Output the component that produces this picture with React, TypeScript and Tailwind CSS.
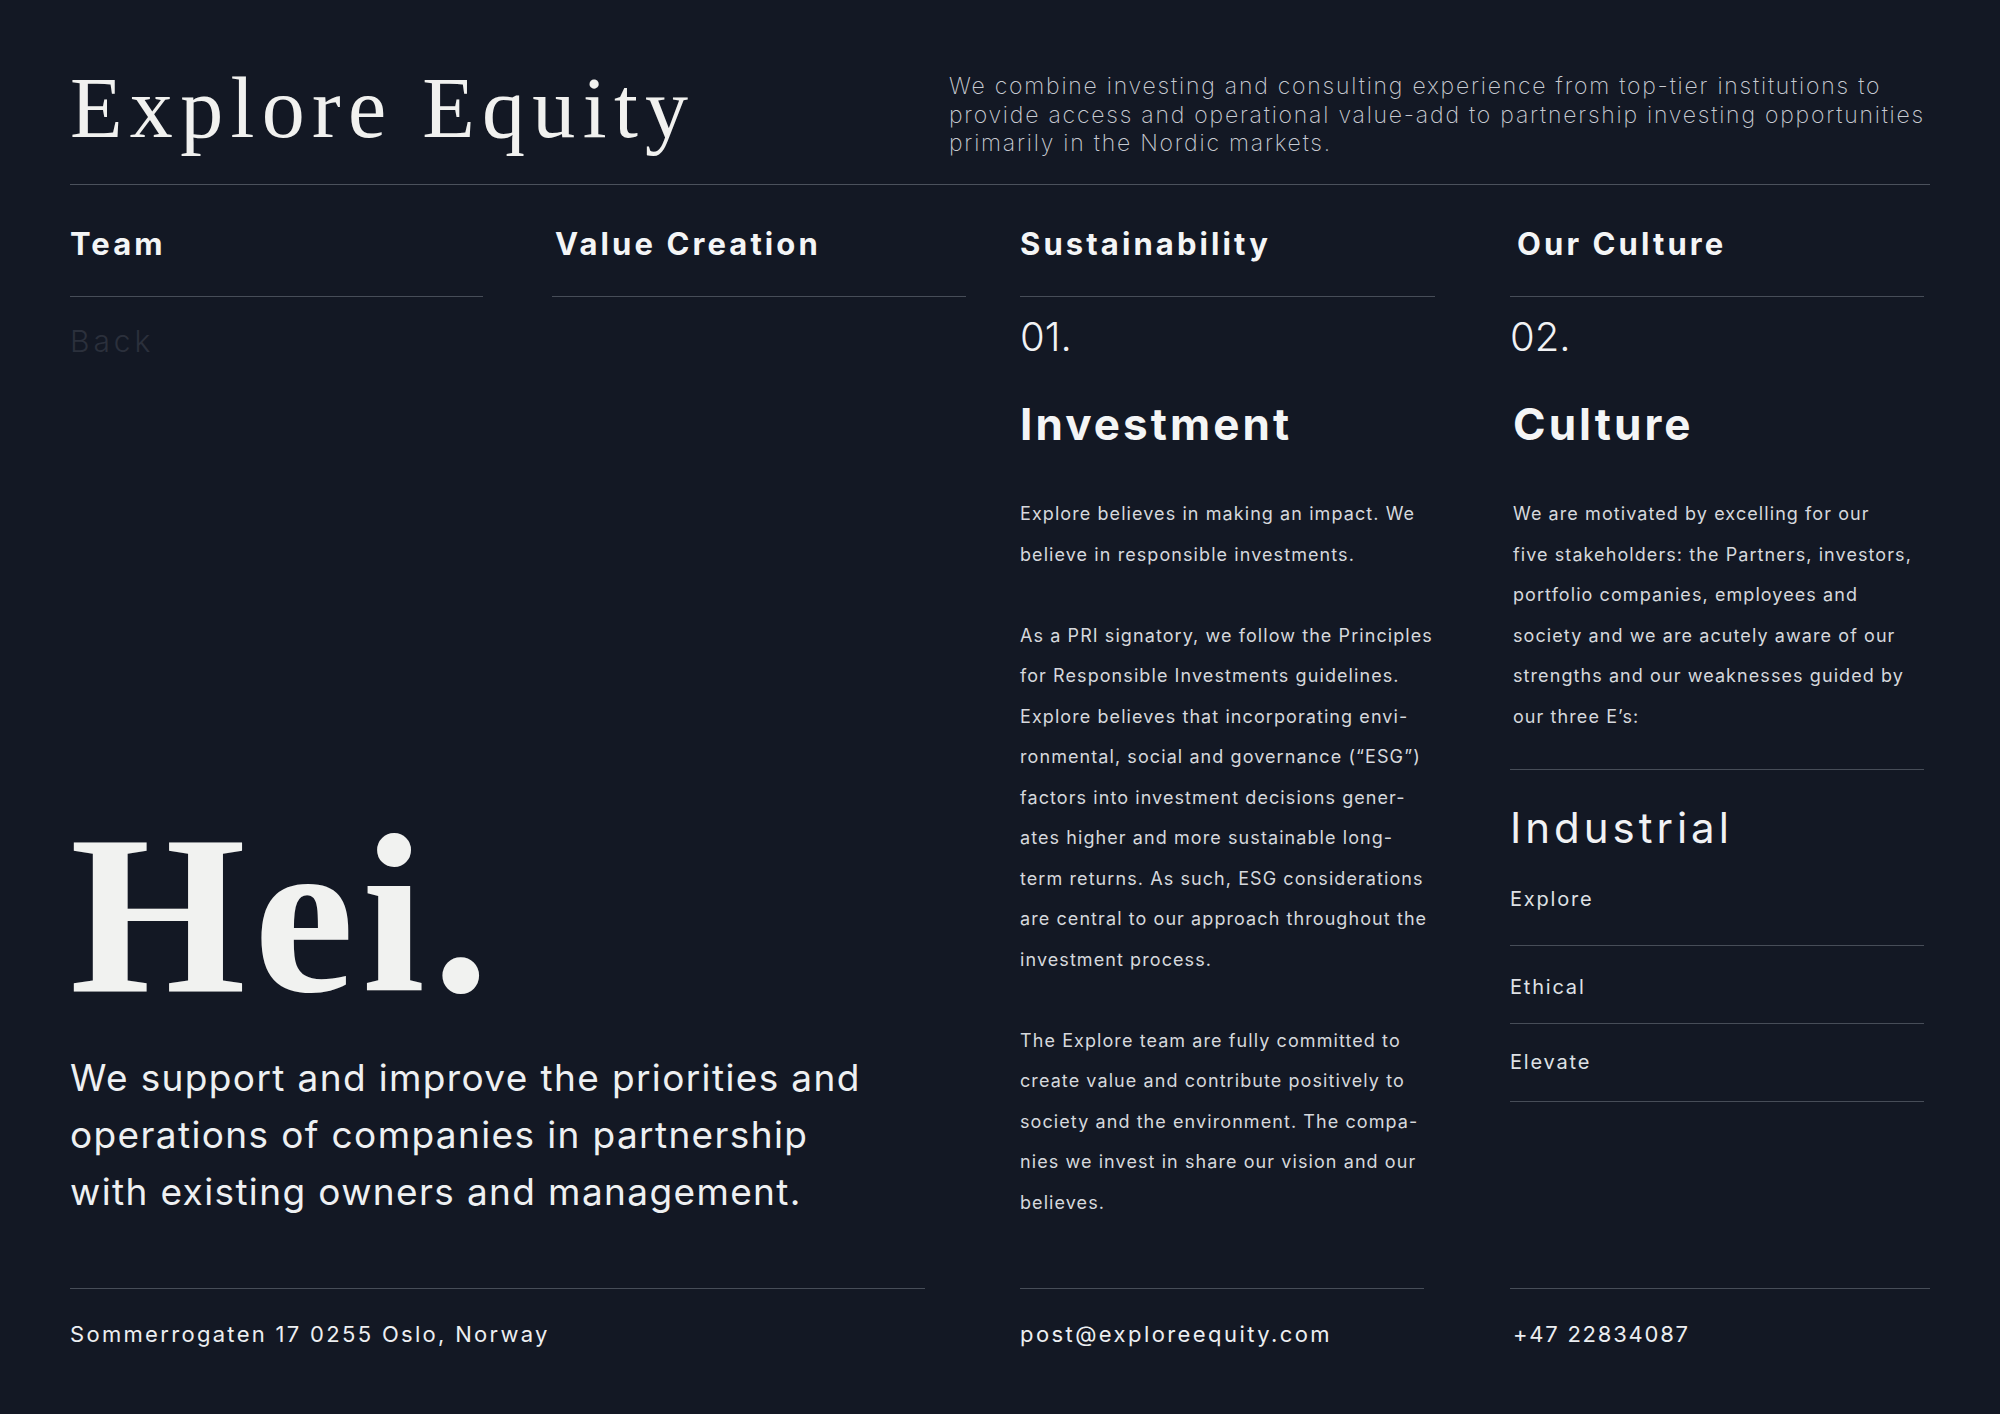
import React from "react";

const investLines = [
  "Explore believes in making an impact. We",
  "believe in responsible investments.",
  "",
  "As a PRI signatory, we follow the Principles",
  "for Responsible Investments guidelines.",
  "Explore believes that incorporating envi-",
  "ronmental, social and governance (“ESG”)",
  "factors into investment decisions gener-",
  "ates higher and more sustainable long-",
  "term returns. As such, ESG considerations",
  "are central to our approach throughout the",
  "investment process.",
  "",
  "The Explore team are fully committed to",
  "create value and contribute positively to",
  "society and the environment. The compa-",
  "nies we invest in share our vision and our",
  "believes.",
];

const cultureLines = [
  "We are motivated by excelling for our",
  "five stakeholders: the Partners, investors,",
  "portfolio companies, employees and",
  "society and we are acutely aware of our",
  "strengths and our weaknesses guided by",
  "our three E’s:",
];

function Body({ lines }: { lines: string[] }) {
  return (
    <div className="text-[18px] leading-[40.5px] tracking-[0.06em] text-[#d6d8dd] whitespace-nowrap">
      {lines.map((l, i) => (
        <div key={i} className="h-[40.5px]">
          {l}
        </div>
      ))}
    </div>
  );
}

function NavHead({ label, inset = "" }: { label: string; inset?: string }) {
  return (
    <div className="border-b border-[#474d58] pt-[43px] pb-[37px]">
      <h2 className={`text-[31px] leading-none font-bold tracking-[0.1em] text-[#f4f5f6] ${inset}`}>
        {label}
      </h2>
    </div>
  );
}

function Footer({ text, width, track, inset = "" }: { text: string; width: string; track: string; inset?: string }) {
  return (
    <div className={`mt-auto border-t border-[#474d58] pt-[34px] pb-[69px] ${width}`}>
      <p className={`text-[22px] leading-none text-[#eceef1] whitespace-nowrap ${track} ${inset}`}>
        {text}
      </p>
    </div>
  );
}

export default function App() {
  return (
    <div className="w-[2000px] h-[1414px] bg-[#131824] px-[70px] flex flex-col font-['Inter','Liberation_Sans',sans-serif]">
      {/* Header */}
      <header className="h-[185px] shrink-0 border-b border-[#4b515c] flex pt-[65px]">
        <h1 className="w-[879px] shrink-0 font-['Liberation_Serif',serif] text-[86px] leading-none tracking-[0.085em] text-[#f1f1ef]">
          Explore Equity
        </h1>
        <p className="mt-[7px] text-[23px] leading-[28.5px] font-extralight tracking-[0.077em] text-[#c8cbd2] whitespace-nowrap">
          We combine investing and consulting experience from top-tier institutions to
          <br />
          provide access and operational value-add to partnership investing opportunities
          <br />
          primarily in the Nordic markets.
        </p>
      </header>

      {/* Columns */}
      <div className="flex flex-1">
        {/* Left block */}
        <div className="w-[896px] flex flex-col">
          <div className="flex">
            <div className="w-[413px]">
              <NavHead label="Team" />
            </div>
            <div className="w-[414px] ml-[69px]">
              <NavHead label="Value Creation" inset="pl-[3px]" />
            </div>
          </div>
          <p className="mt-[29px] text-[30px] leading-none font-light tracking-[0.13em] text-[#2b303c]">
            Back
          </p>
          <h3 className="mt-[446px] font-['Liberation_Serif',serif] font-bold text-[226px] leading-none tracking-[0.035em] text-[#f1f2f0]">
            Hei.
          </h3>
          <p className="mt-[21px] text-[37px] leading-[57px] tracking-[0.037em] text-[#eef0f2] whitespace-nowrap">
            We support and improve the priorities and
            <br />
            operations of companies in partnership
            <br />
            with existing owners and management.
          </p>
          <Footer text="Sommerrogaten 17 0255 Oslo, Norway" width="w-[855px]" track="tracking-[0.105em]" />
        </div>

        {/* Sustainability */}
        <div className="w-[415px] ml-[54px] flex flex-col">
          <NavHead label="Sustainability" />
          <p className="mt-[20px] text-[40px] leading-none font-light text-[#f1f2f4]">01.</p>
          <h3 className="mt-[45px] text-[44px] leading-none font-bold tracking-[0.07em] text-[#f4f5f6]">
            Investment
          </h3>
          <div className="mt-[48px]">
            <Body lines={investLines} />
          </div>
          <Footer text="post@exploreequity.com" width="w-[404px]" track="tracking-[0.11em]" />
        </div>

        {/* Culture */}
        <div className="w-[414px] ml-[75px] flex flex-col">
          <NavHead label="Our Culture" inset="pl-[7px]" />
          <p className="mt-[20px] text-[40px] leading-none font-light text-[#f1f2f4]">02.</p>
          <h3 className="mt-[45px] pl-[3px] text-[44px] leading-none font-bold tracking-[0.07em] text-[#f4f5f6]">
            Culture
          </h3>
          <div className="mt-[48px] pl-[3px]">
            <Body lines={cultureLines} />
          </div>
          <div className="mt-[32px] border-t border-[#474d58]" />
          <h4 className="mt-[37px] text-[42px] leading-none tracking-[0.095em] text-[#f1f2f4]">
            Industrial
          </h4>
          <div className="mt-[40px] pb-[36px] border-b border-[#474d58] text-[20px] leading-none tracking-[0.09em] text-[#dfe1e5]">
            Explore
          </div>
          <div className="pt-[31px] pb-[26px] border-b border-[#474d58] text-[20px] leading-none tracking-[0.09em] text-[#dfe1e5]">
            Ethical
          </div>
          <div className="pt-[28px] pb-[29px] border-b border-[#474d58] text-[20px] leading-none tracking-[0.09em] text-[#dfe1e5]">
            Elevate
          </div>
          <Footer text="+47 22834087" width="w-[420px]" track="tracking-[0.08em]" inset="pl-[3px]" />
        </div>
      </div>
    </div>
  );
}
